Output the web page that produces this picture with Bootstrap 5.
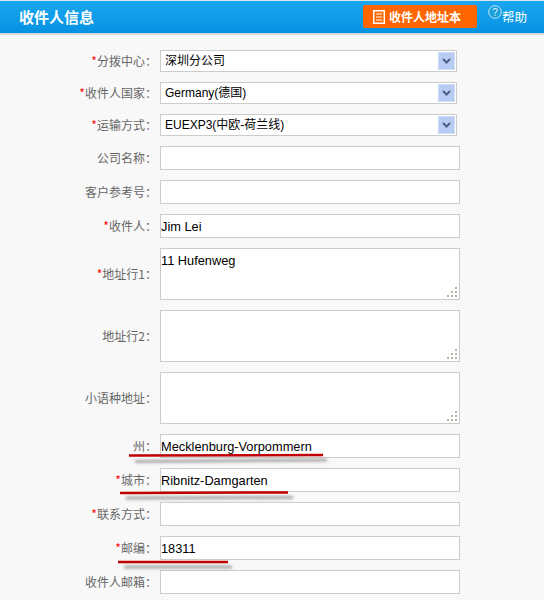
<!DOCTYPE html>
<html lang="zh">
<head>
<meta charset="utf-8">
<link rel="stylesheet" href="https://cdn.jsdelivr.net/npm/bootstrap@5.3.0/dist/css/bootstrap.min.css">
<style>
body{background:#f8f8f8;font-family:"Liberation Sans","Noto Sans CJK SC",sans-serif;font-size:12px;color:#666;overflow:hidden}
.page-wrap{position:relative;width:544px;height:600px;overflow:hidden}
.head-bar{height:35px;background:linear-gradient(#1aa7ef,#0692e2);border-top:1px solid #d5e6ef;border-bottom:2px solid #d8d8d8;padding-left:19px;color:#fff}
.head-title{font-size:15px;font-weight:700;font-family:"Noto Sans CJK SC",sans-serif}
.book-btn{width:114px;height:23px;margin-left:auto;margin-top:-1px;background:#f60;border-radius:2px;color:#fff;font-weight:700;font-family:"Noto Sans CJK SC",sans-serif;padding-left:10px;gap:4px}
.help-link{margin:0 17px 0 11px;color:#fff;font-family:"Noto Sans CJK SC",sans-serif;font-size:12.5px}
.help-icon{align-self:flex-start;margin-top:-3px}
.form-area{padding-top:15px}
.f-row{margin-bottom:10px}
.f-label{width:160px;padding-right:3px;text-align:right;font-family:"Noto Sans CJK SC",sans-serif;font-size:12px;line-height:1}
.req{color:#f00}
.colon{font-family:"Noto Sans CJK TC",sans-serif}
.f-control.form-control,.f-control.form-select{width:300px;height:24px;min-height:0;padding:0;border:1px solid #ccc;border-radius:0;font-family:"Liberation Sans","Noto Sans CJK SC",sans-serif;font-size:12.8px;color:#000;box-shadow:none;background-color:#fff}
.f-control.form-select{width:297px;height:22px;padding-left:4px;font-size:12px;background-size:17px 18px;background-position:right 1px center;background-image:url("data:image/svg+xml,%3Csvg xmlns='http://www.w3.org/2000/svg' width='17' height='18'%3E%3Crect width='17' height='18' fill='%23b7cbf3'/%3E%3Crect x='.5' y='.5' width='16' height='17' fill='none' stroke='%23cfdcf8'/%3E%3Cpath d='M5 7l3.500 3.500L12 7' fill='none' stroke='%234d6185' stroke-width='2'/%3E%3C/svg%3E")}
.f-control.f-area{height:52px;line-height:1.1;padding-top:5px;resize:none;background-repeat:no-repeat;background-position:right 1px bottom 1px;background-image:url("data:image/svg+xml,%3Csvg xmlns='http://www.w3.org/2000/svg' width='12' height='12' fill='%23b5b5a5'%3E%3Crect x='9' y='1' width='2' height='2'/%3E%3Crect x='5' y='5' width='2' height='2'/%3E%3Crect x='9' y='5' width='2' height='2'/%3E%3Crect x='1' y='9' width='2' height='2'/%3E%3Crect x='5' y='9' width='2' height='2'/%3E%3Crect x='9' y='9' width='2' height='2'/%3E%3C/svg%3E")}
.mark-layer{position:absolute;left:0;top:0;pointer-events:none}
</style>
</head>
<body>
<div class="page-wrap">
  <div class="head-bar d-flex align-items-center">
    <div class="head-title">收件人信息</div>
    <a class="book-btn d-flex align-items-center text-decoration-none">
      <svg width="12" height="14" viewBox="0 0 12 14"><rect x=".75" y=".75" width="10.500" height="12.500" fill="none" stroke="#fff" stroke-width="1.500"/><path d="M3 4h6M3 7h6M3 10h6" stroke="#fff"/></svg>
      <span>收件人地址本</span>
    </a>
    <a class="help-link d-flex align-items-center text-decoration-none">
      <svg class="help-icon" width="14" height="14" viewBox="0 0 14 14"><circle cx="7" cy="7" r="6.300" fill="#1c9fd8" stroke="#bfe6f7"/><text x="7" y="10.500" text-anchor="middle" font-size="10" fill="#d8f2ff" font-family="Liberation Sans">?</text></svg>
      <span>帮助</span>
    </a>
  </div>
  <form class="form-area">
    <div class="f-row d-flex align-items-center"><label class="f-label"><span class="req">*</span>分拨中心<span class="colon">：</span></label><select class="f-control form-select"><option>深圳分公司</option></select></div>
    <div class="f-row d-flex align-items-center"><label class="f-label"><span class="req">*</span>收件人国家<span class="colon">：</span></label><select class="f-control form-select"><option>Germany(德国)</option></select></div>
    <div class="f-row d-flex align-items-center"><label class="f-label"><span class="req">*</span>运输方式<span class="colon">：</span></label><select class="f-control form-select"><option>EUEXP3(中欧-荷兰线)</option></select></div>
    <div class="f-row d-flex align-items-center"><label class="f-label">公司名称<span class="colon">：</span></label><input class="f-control form-control"></div>
    <div class="f-row d-flex align-items-center"><label class="f-label">客户参考号<span class="colon">：</span></label><input class="f-control form-control"></div>
    <div class="f-row d-flex align-items-center"><label class="f-label"><span class="req">*</span>收件人<span class="colon">：</span></label><input class="f-control form-control" value="Jim Lei"></div>
    <div class="f-row d-flex align-items-center"><label class="f-label"><span class="req">*</span>地址行1<span class="colon">：</span></label><textarea class="f-control f-area form-control">11 Hufenweg</textarea></div>
    <div class="f-row d-flex align-items-center"><label class="f-label">地址行2<span class="colon">：</span></label><textarea class="f-control f-area form-control"></textarea></div>
    <div class="f-row d-flex align-items-center"><label class="f-label">小语种地址<span class="colon">：</span></label><textarea class="f-control f-area form-control"></textarea></div>
    <div class="f-row d-flex align-items-center"><label class="f-label">州<span class="colon">：</span></label><input class="f-control form-control" value="Mecklenburg-Vorpommern"></div>
    <div class="f-row d-flex align-items-center"><label class="f-label"><span class="req">*</span>城市<span class="colon">：</span></label><input class="f-control form-control" value="Ribnitz-Damgarten"></div>
    <div class="f-row d-flex align-items-center"><label class="f-label"><span class="req">*</span>联系方式<span class="colon">：</span></label><input class="f-control form-control"></div>
    <div class="f-row d-flex align-items-center"><label class="f-label"><span class="req">*</span>邮编<span class="colon">：</span></label><input class="f-control form-control" value="18311"></div>
    <div class="f-row d-flex align-items-center"><label class="f-label">收件人邮箱<span class="colon">：</span></label><input class="f-control form-control"></div>
  </form>
  <svg class="mark-layer" width="544" height="600">
    <defs><filter id="sb" x="-10%" y="-300%" width="120%" height="700%"><feGaussianBlur stdDeviation="1.500"/></filter></defs>
    <g stroke="#888" stroke-width="3" opacity=".75" filter="url(#sb)">
      <path d="M135 461.500L327 460"/><path d="M126 498L293 497.500"/><path d="M124 567L232 567"/>
    </g>
    <g stroke="#c00000" stroke-width="2.500" fill="none">
      <path d="M129 455.500L323 455"/><path d="M120 493L288 492.500"/><path d="M118 562L228 562"/>
    </g>
  </svg>
</div>
<script src="https://cdn.jsdelivr.net/npm/bootstrap@5.3.0/dist/js/bootstrap.bundle.min.js"></script>
</body>
</html>
